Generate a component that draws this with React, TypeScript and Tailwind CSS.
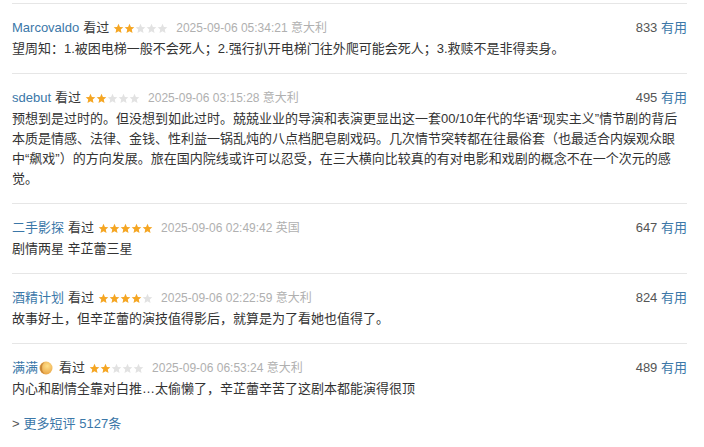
import React from "react";

const FONT = '"Liberation Sans", "Noto Sans CJK SC", sans-serif';

function Star({ filled }: { filled: boolean }) {
  return (
    <svg width="11" height="11" viewBox="0 0 24 24" className="block">
      <path
        d="M12 1.8l3.1 6.9 7.4.7-5.6 5 1.7 7.4L12 17.9l-6.6 3.9 1.7-7.4-5.6-5 7.4-.7z"
        fill={filled ? "#f5a623" : "#e2e2e2"}
      />
    </svg>
  );
}

function Stars({ n }: { n: number }) {
  return (
    <span className="inline-flex items-center gap-0 ml-[4px] mr-[8px]">
      {[0, 1, 2, 3, 4].map((i) => (
        <Star key={i} filled={i < n} />
      ))}
    </span>
  );
}

function Moon() {
  return (
    <svg width="14" height="14" viewBox="0 0 14 14" className="inline-block ml-[1px] mr-[6px]">
      <defs>
        <radialGradient id="mg" cx="0.6" cy="0.35" r="0.7">
          <stop offset="0" stopColor="#ffe08a" />
          <stop offset="1" stopColor="#e8a040" />
        </radialGradient>
      </defs>
      <circle cx="7" cy="7" r="6.5" fill="url(#mg)" />
      <path d="M5.5 1.2A6 6 0 0 0 5.5 12.8A6.5 6.5 0 0 1 3.2 7A6.5 6.5 0 0 1 5.5 1.2z" fill="#b8752e" opacity="0.7" />
    </svg>
  );
}

type Review = {
  name: string;
  stars: number;
  date: string;
  place: string;
  votes: number;
  lines: string[];
  moon?: boolean;
};

const reviews: Review[] = [
  {
    name: "Marcovaldo",
    stars: 2,
    date: "2025-09-06 05:34:21",
    place: "意大利",
    votes: 833,
    lines: ["望周知：1.被困电梯一般不会死人；2.强行扒开电梯门往外爬可能会死人；3.救赎不是非得卖身。"],
  },
  {
    name: "sdebut",
    stars: 2,
    date: "2025-09-06 03:15:28",
    place: "意大利",
    votes: 495,
    lines: [
      "预想到是过时的。但没想到如此过时。兢兢业业的导演和表演更显出这一套00/10年代的华语“现实主义”情节剧的背后",
      "本质是情感、法律、金钱、性利益一锅乱炖的八点档肥皂剧戏码。几次情节突转都在往最俗套（也最适合内娱观众眼",
      "中“飙戏”）的方向发展。旅在国内院线或许可以忍受，在三大横向比较真的有对电影和戏剧的概念不在一个次元的感",
      "觉。",
    ],
  },
  {
    name: "二手影探",
    stars: 5,
    date: "2025-09-06 02:49:42",
    place: "英国",
    votes: 647,
    lines: ["剧情两星 辛芷蕾三星"],
  },
  {
    name: "酒精计划",
    stars: 4,
    date: "2025-09-06 02:22:59",
    place: "意大利",
    votes: 824,
    lines: ["故事好土，但辛芷蕾的演技值得影后，就算是为了看她也值得了。"],
  },
  {
    name: "满满",
    stars: 2,
    date: "2025-09-06 06:53:24",
    place: "意大利",
    votes: 489,
    lines: ["内心和剧情全靠对白推…太偷懒了，辛芷蕾辛苦了这剧本都能演得很顶"],
    moon: true,
  },
];

export default function App() {
  return (
    <div
      className="w-[704px] h-[447px] bg-white overflow-hidden pl-[12px] pr-[17px] pt-[3px]"
      style={{ fontFamily: FONT }}
    >
      {reviews.map((r, idx) => (
        <div key={idx} className="border-t border-[#e6e6e6] pt-[14px] pb-[14px]">
          <div className="flex items-center justify-between h-[20px] text-[13px] leading-[20px]">
            <div className="flex items-center whitespace-nowrap">
              <span className="text-[#3b77a8]">{r.name}</span>
              {r.moon ? <Moon /> : <span className="w-[4px]" />}
              <span className="text-[#3a3a3a]">看过</span>
              <Stars n={r.stars} />
              <span className="text-[#b0b0b0] text-[12px]">
                {r.date} {r.place}
              </span>
            </div>
            <div className="whitespace-nowrap">
              <span className="text-[#555]">{r.votes}</span>{" "}
              <span className="text-[#3b77a8]">有用</span>
            </div>
          </div>
          <div className="mt-[1px] text-[13px] leading-[20px] text-[#333] whitespace-nowrap">
            {r.lines.map((l, i) => (
              <div key={i}>{l}</div>
            ))}
          </div>
        </div>
      ))}
      <div className="mt-[1px] text-[13px] leading-[20px] whitespace-nowrap">
        <span className="text-[#555] mr-[4px]">&gt;</span>
        <span className="text-[#3b77a8]">更多短评 5127条</span>
      </div>
    </div>
  );
}
